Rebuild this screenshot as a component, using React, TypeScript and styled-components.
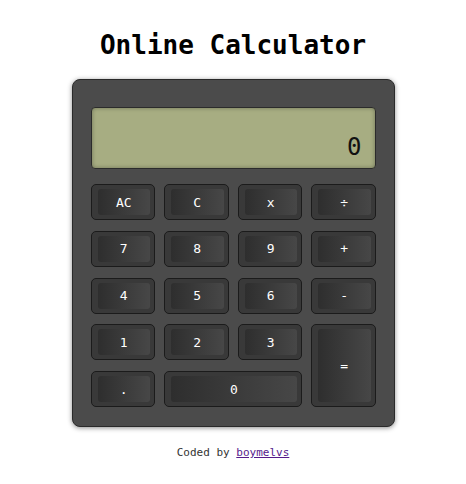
import React, { useState } from 'react'
import styled, { createGlobalStyle } from 'styled-components'

const GlobalStyle = createGlobalStyle`
  body {
    margin: 0;
    background: #fff;
    font-family: 'DejaVu Sans Mono', 'Liberation Mono', monospace;
  }
`

const Page = styled.div`
  display: flex;
  flex-direction: column;
  align-items: center;
  padding-top: 30px;
`

const Title = styled.h1`
  margin: 0;
  font-size: 26px;
  line-height: 30px;
  font-weight: bold;
  color: #000;
`

const Body = styled.div`
  margin-top: 19px;
  width: 323px;
  box-sizing: border-box;
  padding: 27px 18px 19px;
  background: #4b4b4b;
  border: 1px solid #2a2a2a;
  border-radius: 8px;
  box-shadow: 0 1px 5px rgba(0, 0, 0, 0.45);
`

const Screen = styled.div`
  height: 62px;
  box-sizing: border-box;
  display: flex;
  align-items: flex-end;
  justify-content: flex-end;
  padding: 0 13px 7px;
  background: #a7ad82;
  border: 1px solid #2b2b2b;
  border-radius: 4px;
  box-shadow: inset 0 0 4px rgba(0, 0, 0, 0.35);
  font-size: 24px;
  line-height: 28px;
  color: #111;
`

const Keys = styled.div`
  margin-top: 15px;
  display: grid;
  grid-template-columns: repeat(4, 1fr);
  grid-auto-rows: 36px;
  column-gap: 9px;
  row-gap: 10.75px;
`

const Key = styled.button<{ $wide?: boolean; $tall?: boolean }>`
  grid-column: ${(p) => (p.$wide ? 'span 2' : 'auto')};
  grid-row: ${(p) => (p.$tall ? 'span 2' : 'auto')};
  display: flex;
  padding: 4px 4px 4px 6px;
  margin: 0;
  background: #393939;
  border: 1px solid #1b1b1b;
  border-radius: 5px;
  cursor: pointer;
  font: inherit;
`

const Face = styled.span`
  flex: 1;
  display: flex;
  align-items: center;
  justify-content: center;
  border-radius: 3px;
  background: linear-gradient(to right, #2e2e2e, #474747);
  color: #fff;
  font-size: 13px;
  font-weight: normal;
`

const Footer = styled.p`
  margin: 19px 0 0;
  font-size: 11px;
  color: #333;

  a {
    color: #551a8b;
  }
`

type KeyDef = { label: string; wide?: boolean; tall?: boolean }

const keys: KeyDef[] = [
  { label: 'AC' },
  { label: 'C' },
  { label: 'x' },
  { label: '÷' },
  { label: '7' },
  { label: '8' },
  { label: '9' },
  { label: '+' },
  { label: '4' },
  { label: '5' },
  { label: '6' },
  { label: '-' },
  { label: '1' },
  { label: '2' },
  { label: '3' },
  { label: '=', tall: true },
  { label: '.' },
  { label: '0', wide: true },
]

export default function App() {
  const [value] = useState('0')

  return (
    <Page>
      <GlobalStyle />
      <Title>Online Calculator</Title>
      <Body>
        <Screen>{value}</Screen>
        <Keys>
          {keys.map((k) => (
            <Key key={k.label} $wide={k.wide} $tall={k.tall}>
              <Face>{k.label}</Face>
            </Key>
          ))}
        </Keys>
      </Body>
      <Footer>
        Coded by <a href="#">boymelvs</a>
      </Footer>
    </Page>
  )
}
